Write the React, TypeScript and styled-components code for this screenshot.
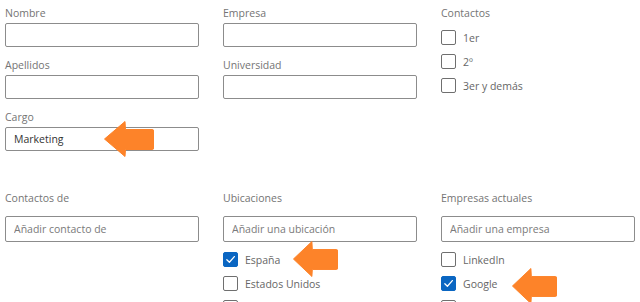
import React from 'react'
import styled, { createGlobalStyle } from 'styled-components'

const GlobalStyle = createGlobalStyle`
  html, body {
    margin: 0;
    padding: 0;
    background: #ffffff;
  }
  body {
    font-family: "Open Sans", "Noto Sans", Arial, sans-serif;
  }
`

type Option = { label: string; checked?: boolean; arrow?: { left: number; top: number; width: number } }

export default function App() {
  const contactos: Option[] = [{ label: '1er' }, { label: '2º' }, { label: '3er y demás' }]
  // la tercera fila queda cortada por el borde inferior
  const ubicaciones: Option[] = [
    { label: 'España', checked: true, arrow: { left: 70, top: -11, width: 45 } },
    { label: 'Estados Unidos' },
    { label: '' },
  ]
  const empresas: Option[] = [
    { label: 'LinkedIn' },
    { label: 'Google', checked: true, arrow: { left: 71, top: -8, width: 45 } },
    { label: '' },
  ]

  return (
    <Page>
      <GlobalStyle />
      <TopGrid>
        <Column>
          <Field>
            <Label>Nombre</Label>
            <Input />
          </Field>
          <Field>
            <Label>Apellidos</Label>
            <Input />
          </Field>
          <Field>
            <Label>Cargo</Label>
            <Input defaultValue="Marketing" />
            <Arrow style={{ left: 99, top: 12, width: 50 }} />
          </Field>
        </Column>
        <Column>
          <Field>
            <Label>Empresa</Label>
            <Input />
          </Field>
          <Field>
            <Label>Universidad</Label>
            <Input />
          </Field>
        </Column>
        <Column>
          <Label>Contactos</Label>
          <CheckList $top={7}>
            {contactos.map((o, i) => (
              <CheckRow key={i} o={o} />
            ))}
          </CheckList>
        </Column>
      </TopGrid>

      <BottomGrid>
        <Column>
          <Label>Contactos de</Label>
          <BigInput placeholder="Añadir contacto de" />
        </Column>
        <Column>
          <Label>Ubicaciones</Label>
          <BigInput placeholder="Añadir una ubicación" />
          <CheckList $top={10}>
            {ubicaciones.map((o, i) => (
              <CheckRow key={i} o={o} />
            ))}
          </CheckList>
        </Column>
        <Column>
          <Label>Empresas actuales</Label>
          <BigInput placeholder="Añadir una empresa" />
          <CheckList $top={10}>
            {empresas.map((o, i) => (
              <CheckRow key={i} o={o} />
            ))}
          </CheckList>
        </Column>
      </BottomGrid>
    </Page>
  )
}

function CheckRow({ o }: { o: Option }) {
  return (
    <Row>
      <Box $checked={!!o.checked}>
        {o.checked && (
          <svg width="11" height="11" viewBox="0 0 12 12" fill="none">
            <path d="M2 6.3 L4.8 9 L10.2 2.8" stroke="#fff" strokeWidth="1.4" strokeLinecap="round" strokeLinejoin="round" />
          </svg>
        )}
      </Box>
      {o.label && <RowText>{o.label}</RowText>}
      {o.arrow && <Arrow style={{ left: o.arrow.left, top: o.arrow.top, width: o.arrow.width }} />}
    </Row>
  )
}

function Arrow({ style }: { style: React.CSSProperties }) {
  return (
    <ArrowSvg style={style} viewBox="0 0 50 36" preserveAspectRatio="none" height="36">
      <path
        d="M0.5 18 L21 0.5 L21.5 8.5 L48 8.5 Q50 8.5 50 10.5 L50 26.5 Q50 28.5 48 28.5 L21.5 28.5 L21 35.5 Z"
        fill="#fd8329"
        stroke="#fd8329"
        strokeLinejoin="round"
      />
    </ArrowSvg>
  )
}

const Page = styled.div`
  width: 640px;
  height: 302px;
  overflow: hidden;
  padding: 5px 0 0 5px;
  box-sizing: border-box;
`

const TopGrid = styled.div`
  display: grid;
  grid-template-columns: 194px 194px 194px;
  column-gap: 24px;
  align-items: start;
`

const BottomGrid = styled(TopGrid)`
  margin-top: 29px;
  & > div > input {
    margin-top: 8px;
  }
`

const Column = styled.div`
  display: flex;
  flex-direction: column;
`

const Field = styled.div`
  position: relative;
  display: flex;
  flex-direction: column;
  margin-bottom: 10px;
`

const Label = styled.div`
  font-size: 10.5px;
  line-height: 16px;
  color: #747474;
  margin-bottom: 2px;
`

const Input = styled.input`
  box-sizing: border-box;
  width: 194px;
  height: 24px;
  border: 1px solid #8c8c8c;
  border-radius: 2px;
  padding: 0 8px;
  font-family: "Open Sans", "Noto Sans", Arial, sans-serif;
  font-size: 10.5px;
  color: #333;
  background: #fff;
  outline: none;
`

const BigInput = styled(Input)`
  height: 26px;
  &::placeholder {
    color: #7a7a7a;
  }
`

const CheckList = styled.div<{ $top: number }>`
  display: flex;
  flex-direction: column;
  gap: 9px;
  margin-top: ${(p) => p.$top}px;
`

const Row = styled.div`
  position: relative;
  display: flex;
  align-items: center;
  gap: 7px;
  height: 15px;
`

const Box = styled.span<{ $checked: boolean }>`
  box-sizing: border-box;
  width: 15px;
  height: 15px;
  border-radius: 2px;
  border: 1px solid ${(p) => (p.$checked ? '#0a66c2' : '#6f6f6f')};
  background: ${(p) => (p.$checked ? '#0a66c2' : '#fff')};
  display: flex;
  align-items: center;
  justify-content: center;
`

const RowText = styled.span`
  font-size: 10.5px;
  color: #666;
`

const ArrowSvg = styled.svg`
  position: absolute;
  pointer-events: none;
`
